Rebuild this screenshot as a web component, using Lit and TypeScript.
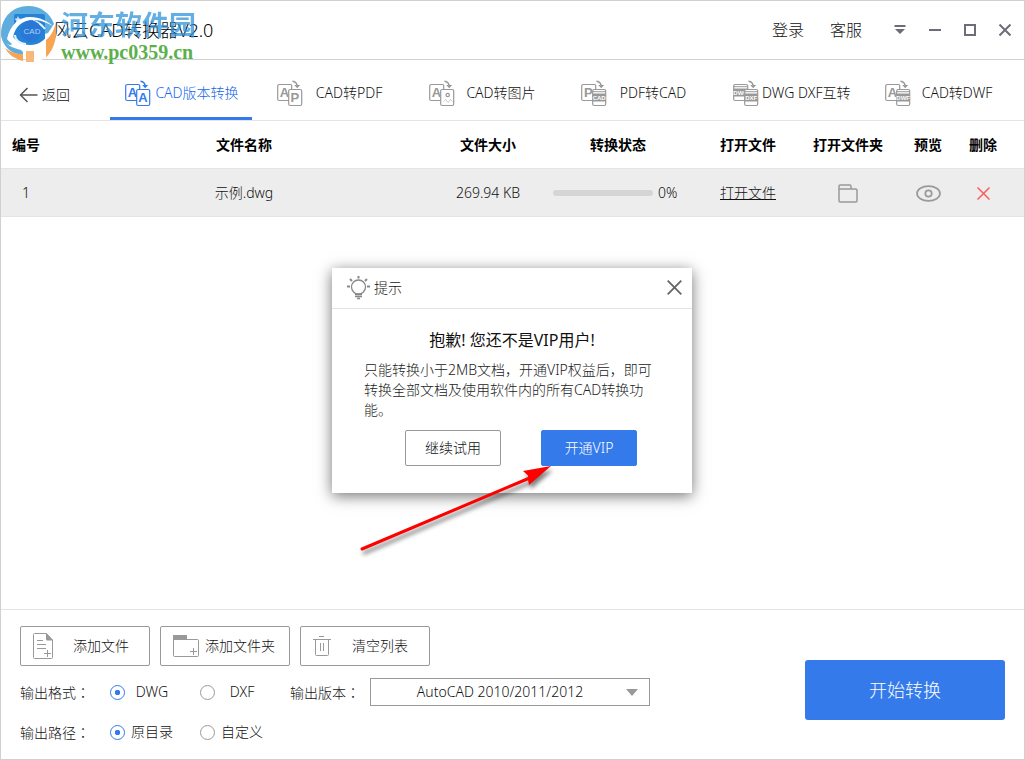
import { LitElement, html, svg, css } from "lit";
import { customElement, state } from "lit/decorators.js";
import { classMap } from "lit/directives/class-map.js";

type Face = { kind: "letter" | "band" | "picture"; text?: string };
interface Tab {
  label: string;
  from: Face;
  to: Face;
}

const TABS: Tab[] = [
  { label: "CAD版本转换", from: { kind: "letter", text: "A" }, to: { kind: "letter", text: "A" } },
  { label: "CAD转PDF", from: { kind: "letter", text: "A" }, to: { kind: "letter", text: "P" } },
  { label: "CAD转图片", from: { kind: "letter", text: "A" }, to: { kind: "picture" } },
  { label: "PDF转CAD", from: { kind: "letter", text: "P" }, to: { kind: "band", text: "CAD" } },
  { label: "DWG DXF互转", from: { kind: "band", text: "DWG" }, to: { kind: "band", text: "DXF" } },
  { label: "CAD转DWF", from: { kind: "letter", text: "A" }, to: { kind: "band", text: "DWF" } },
];

const FILES = [{ id: 1, name: "示例.dwg", size: "269.94 KB", progress: 0 }];

const VERSIONS = ["AutoCAD 2010/2011/2012", "AutoCAD 2007/2008/2009", "AutoCAD 2004/2005/2006"];

@customElement("convert-icon")
class ConvertIcon extends LitElement {
  static properties = { from: { attribute: false }, to: { attribute: false } };
  declare from: Face;
  declare to: Face;

  static styles = css`
    :host {
      display: block;
      flex: none;
      width: 26px;
      height: 27px;
    }
    svg {
      display: block;
    }
    text {
      font-family: "Liberation Sans", sans-serif;
      font-weight: 700;
      text-anchor: middle;
    }
    .glyph {
      font-size: 13px;
      fill: currentColor;
    }
    .code {
      font-size: 6px;
      fill: #fff;
    }
  `;

  private face(face: Face, x: number, y: number, w: number) {
    const box = svg`<rect x=${x} y=${y} width=${w} height="16" rx="1.5" fill="#fff" stroke="currentColor" stroke-width="1.2"/>`;
    if (face.kind === "letter") {
      return svg`${box}<text class="glyph" x=${x + w / 2 - 0.3} y=${y + 12}>${face.text}</text>`;
    }
    if (face.kind === "picture") {
      return svg`${box}<circle cx=${x + 7} cy=${y + 5.5} r="1.7" fill="none" stroke="currentColor" stroke-width="1.2"/>
        <path d="M${x + 3} ${y + 12}l2-2 2.500 3 2-3 2.500 2" fill="none" stroke="currentColor" stroke-width="1" opacity=".5"/>`;
    }
    return svg`${box}
      <path d="M${x} ${y + 2.2}h${w}" stroke="currentColor"/>
      <rect x=${x} y=${y + 4} width=${w} height="8" fill="currentColor"/>
      <text class="code" x=${x + w / 2} y=${y + 10.2}>${face.text}</text>`;
  }

  render() {
    return html`<svg width="26" height="27" viewBox="0 0 26 27" aria-hidden="true">
      ${this.face(this.from, 0.7, 4.5, 14)} ${this.face(this.to, 11.7, 9.5, 13)}
      <path d="M15.500 1.200c3 .3 4.500 2 4.700 5" fill="none" stroke="currentColor" stroke-width="1.500" />
      <path d="M17.200 5h6l-3 3.300z" fill="currentColor" />
    </svg>`;
  }
}

@customElement("app-root")
class AppRoot extends LitElement {
  @state() private active = 0;
  @state() private dialogOpen = true;
  @state() private format = "DWG";
  @state() private path = "原目录";

  static styles = css`
    :host {
      display: block;
      font: 300 14px/20px "Noto Sans", "Noto Sans CJK SC", sans-serif;
      color: #111;
    }
    * {
      box-sizing: border-box;
    }
    button,
    select,
    input {
      font: inherit;
      color: inherit;
      margin: 0;
    }
    button {
      padding: 0;
      border: 0;
      background: none;
      cursor: pointer;
      white-space: nowrap;
    }
    a {
      color: inherit;
      text-decoration: none;
    }
    svg {
      display: block;
      flex: none;
    }
    .window {
      position: relative;
      display: flex;
      flex-direction: column;
      min-height: 100vh;
      background: #fff;
      border: 1px solid #d0d0d0;
    }

    .titlebar {
      display: flex;
      align-items: center;
      height: 59px;
      border-bottom: 1px solid #d0d0d0;
      padding: 0 2px 0 12px;
    }
    .brand {
      display: flex;
      align-items: center;
      gap: 7px;
      margin: 0 auto 0 0;
      font-size: 18px;
      font-weight: 300;
      color: #000;
    }
    .account {
      display: flex;
      gap: 26px;
      margin-right: 20px;
      font-size: 16px;
    }
    .controls {
      display: flex;
      color: #6f6b7b;
    }
    .controls button {
      display: grid;
      place-items: center;
      width: 35px;
      height: 35px;
    }
    .watermark {
      position: absolute;
      left: 0;
      top: 2px;
      display: flex;
      align-items: flex-start;
      pointer-events: none;
    }
    .mark-text {
      margin: 3px 0 0 4px;
      white-space: nowrap;
    }
    .mark-name {
      display: block;
      font: 700 27px/36px "Noto Sans CJK SC", sans-serif;
      color: #2f93da;
      opacity: 0.75;
    }
    .mark-url {
      display: block;
      font: 700 20px/20px "Liberation Serif", serif;
      color: #5bb04c;
    }

    .tabs {
      display: grid;
      grid-template-columns: 99px repeat(6, minmax(0, 1fr));
      gap: 10px;
      height: 61px;
      padding-right: 12px;
      border-bottom: 1px solid #e4e4e4;
    }
    .back {
      display: flex;
      align-items: center;
      gap: 4px;
      padding: 9px 0 0 18px;
    }
    .tab {
      display: flex;
      align-items: center;
      gap: 3px;
      padding: 9px 12px 0 15px;
      border-bottom: 3px solid transparent;
    }
    .tab convert-icon {
      color: #999;
    }
    .tab span {
      flex: 1;
      text-align: center;
    }
    .tab.active,
    .tab.active convert-icon {
      color: #347aeb;
      border-color: #347aeb;
    }
    .tab.active {
      color: #1468e8;
    }

    .list {
      flex: 1;
    }
    table {
      width: 100%;
      table-layout: fixed;
      border-collapse: separate;
      border-spacing: 0;
      text-align: center;
    }
    th,
    td {
      height: 48px;
      padding: 0;
      border-bottom: 1px solid #e4e4e4;
      white-space: nowrap;
    }
    th {
      font-weight: 700;
      color: #000;
    }
    td {
      background: #ededed;
    }
    th:last-child,
    td:last-child {
      padding-right: 17px;
    }
    .c-no {
      width: 50px;
    }
    .c-mid {
      width: 102px;
    }
    .c-state {
      width: 158px;
    }
    .c-folder {
      width: 98px;
    }
    .c-view {
      width: 62px;
    }
    .c-del {
      width: 65px;
    }
    .state {
      display: flex;
      align-items: center;
      gap: 5px;
      padding-left: 14px;
    }
    progress {
      appearance: none;
      width: 100px;
      height: 6px;
      border: 0;
    }
    progress::-webkit-progress-bar {
      background: #d5d5d5;
      border-radius: 3px;
    }
    progress::-webkit-progress-value {
      background: #347aeb;
      border-radius: 3px;
    }
    .open {
      text-decoration: underline;
    }
    td button {
      display: inline-block;
      vertical-align: middle;
    }

    .footer {
      display: flex;
      justify-content: space-between;
      align-items: flex-end;
      border-top: 1px solid #e4e4e4;
      padding: 16px 19px 13px;
    }
    .settings {
      display: grid;
      gap: 12px;
    }
    .actions {
      display: flex;
      gap: 10px;
    }
    .action {
      display: flex;
      align-items: center;
      width: 130px;
      height: 40px;
      padding-left: 12px;
      border: 1px solid #999;
      border-radius: 2px;
    }
    .action span {
      flex: 1;
      text-align: center;
    }
    .action.wide span {
      margin-right: 8px;
    }
    .row {
      display: grid;
      grid-template-columns: 90px 90px 90px 80px 280px;
      align-items: center;
      height: 28px;
      margin: 0;
      padding: 0;
      border: 0;
    }
    .colon {
      font-family: "Noto Sans CJK TC", sans-serif;
    }
    .choice {
      display: flex;
      align-items: center;
      gap: 6px;
    }
    .choice span {
      width: 42px;
      text-align: center;
    }
    input[type="radio"] {
      appearance: none;
      width: 15px;
      height: 15px;
      border: 1px solid #999;
      border-radius: 50%;
      background: #fff;
    }
    input[type="radio"]:checked {
      border-color: #347aeb;
      background: radial-gradient(circle, #347aeb 2.5px, transparent 3px);
    }
    .pick {
      position: relative;
    }
    .pick svg {
      position: absolute;
      right: 12px;
      top: 11px;
      pointer-events: none;
    }
    select {
      display: block;
      appearance: none;
      width: 100%;
      height: 28px;
      padding: 0 20px 0 0;
      border: 1px solid #999;
      border-radius: 0;
      background: #fff;
      text-align: center;
      text-align-last: center;
    }
    .start {
      width: 200px;
      height: 60px;
      margin-bottom: 26px;
      border-radius: 3px;
      background: #347aeb;
      color: #fff;
      font-size: 18px;
    }

    .overlay {
      position: absolute;
      inset: 0;
      display: grid;
      place-items: center;
      padding-right: 1px;
      pointer-events: none;
    }
    .dialog {
      position: relative;
      width: 360px;
      background: #fff;
      box-shadow: 0 3px 14px rgba(0, 0, 0, 0.55);
      pointer-events: auto;
    }
    .dialog-head {
      display: flex;
      align-items: center;
      gap: 4px;
      height: 41px;
      padding: 0 10px 0 15px;
      border-bottom: 1px solid #e4e4e4;
    }
    .dialog-head h2 {
      margin: 0 auto 0 0;
      font-size: 14px;
      font-weight: 300;
    }
    .dialog-body {
      padding: 19px 32px 27px;
    }
    .dialog-body h3 {
      margin: 0 0 8px;
      font-size: 16px;
      line-height: 24px;
      font-weight: 400;
      text-align: center;
      color: #111;
    }
    .dialog-body p {
      margin: 0 0 10px;
      color: #222;
    }
    .buttons {
      display: flex;
      justify-content: center;
      gap: 40px;
      padding-left: 18px;
    }
    .buttons button {
      width: 96px;
      height: 36px;
      border: 1px solid #999;
      border-radius: 2px;
    }
    .buttons .primary {
      border-color: #347aeb;
      background: #347aeb;
      color: #fff;
    }
    .pointer {
      position: absolute;
      left: 20px;
      top: 190px;
      pointer-events: none;
      filter: drop-shadow(2px 4px 2px rgba(0, 0, 0, 0.5));
    }
  `;

  private renderTitle() {
    return html`<header class="titlebar">
      <h1 class="brand">
        <svg width="33" height="34" viewBox="0 0 33 34" aria-hidden="true">
          <rect x="1" y="1" width="31" height="32" rx="3" fill="#1677d2" />
        </svg>
        风云CAD转换器V2.0
      </h1>
      <nav class="account"><a href="#login">登录</a><a href="#service">客服</a></nav>
      <div class="controls">
        <button aria-label="菜单">
          <svg width="12" height="12" viewBox="0 0 12 12" fill="currentColor"><path d="M.5 1h11v2H.5zM1 5h10l-5 5z" /></svg>
        </button>
        <button aria-label="最小化">
          <svg width="12" height="12" viewBox="0 0 12 12" fill="currentColor"><path d="M0 5h12v2H0z" /></svg>
        </button>
        <button aria-label="最大化">
          <svg width="12" height="12" viewBox="0 0 12 12" fill="none" stroke="currentColor" stroke-width="2"><path d="M1 1h10v10H1z" /></svg>
        </button>
        <button aria-label="关闭">
          <svg width="12" height="12" viewBox="0 0 12 12" fill="none" stroke="currentColor" stroke-width="2"><path d="M.5.5l11 11M11.500.5l-11 11" /></svg>
        </button>
      </div>
    </header>`;
  }

  private renderWatermark() {
    return html`<div class="watermark">
      <svg width="56" height="60" viewBox="0 0 56 60" aria-hidden="true">
        <path d="M0 31C0 14 12 3 27 3c13 0 22 7 26 18l-6 9L9 42C3 41 0 37 0 31z" fill="#5dade0" />
        <rect x="13" y="11" width="31" height="31" rx="2" fill="#2583d8" />
        <path d="M17 13l1 2.500 2.500.3-2 1.600.6 2.600-2.100-1.400-2.200 1.400.6-2.600-2-1.600 2.600-.3z" fill="#d5ebfb" />
        <path d="M6 36C9 22 18 14 29 14c10 0 17 4 23 9-6-3-12-6-20-6-11 0-18 7-20 17 4 5 10 8 17 8 10 0 17-6 23-18 1 8-3 15-9 20-10 6-28 4-37-8z" fill="#fff" />
        <path d="M44 26c-3-4-7-7-12-8M14 32c0 5 5 9 11 9" fill="none" stroke="#e6f3fc" stroke-width="2" />
        <circle cx="30" cy="28" r="10.500" fill="#2a78d6" />
        <text x="31" y="31" text-anchor="middle" font-family="Liberation Sans" font-size="8" fill="#a9d2f6">CAD</text>
        <path d="M1 36c4 6 11 9 19 11l2 2v3C12 51 4 46 1 36z" fill="#5dade0" />
        <path d="M4 45c5 4 11 6 18 6v7C14 56 8 52 4 45z" fill="#f7a453" />
        <path d="M25 48h8v11h-8z" fill="#f9b878" />
        <path d="M45 37c5-4 8-10 10-17 2 17-4 29-10 34z" fill="#f7a453" />
        <path d="M33 48c5-1 9-4 12-8v14c-4 3-8 4-12 5z" fill="#fff" />
        <path d="M45 38v16l3-3V35z" fill="#f7a453" />
      </svg>
      <div class="mark-text">
        <span class="mark-name">河东软件园</span>
        <span class="mark-url">www.pc0359.cn</span>
      </div>
    </div>`;
  }

  private renderTabs() {
    return html`<nav class="tabs">
      <button class="back">
        <svg width="19" height="16" viewBox="0 0 19 16" fill="none" stroke="#555" stroke-width="1.500"><path d="M18.500 8H1.500M8.500 1l-7 7 7 7" /></svg>
        返回
      </button>
      ${TABS.map(
        (tab, i) => html`<button class=${classMap({ tab: true, active: i === this.active })} @click=${() => (this.active = i)}>
          <convert-icon .from=${tab.from} .to=${tab.to}></convert-icon><span>${tab.label}</span>
        </button>`,
      )}
    </nav>`;
  }

  private renderList() {
    return html`<main class="list">
      <table>
        <colgroup>
          <col class="c-no" /><col /><col class="c-mid" /><col class="c-state" /><col class="c-mid" />
          <col class="c-folder" /><col class="c-view" /><col class="c-del" />
        </colgroup>
        <thead>
          <tr>
            ${["编号", "文件名称", "文件大小", "转换状态", "打开文件", "打开文件夹", "预览", "删除"].map((h) => html`<th scope="col">${h}</th>`)}
          </tr>
        </thead>
        <tbody>
          ${FILES.map(
            (f) => html`<tr>
              <td>${f.id}</td>
              <td>${f.name}</td>
              <td>${f.size}</td>
              <td>
                <div class="state"><progress max="100" value=${f.progress} aria-label="转换状态"></progress><span>${f.progress}%</span></div>
              </td>
              <td><a class="open" href="#open">打开文件</a></td>
              <td>
                <button aria-label="打开文件夹">
                  <svg width="20" height="19" viewBox="0 0 20 19" fill="none" stroke="#999" stroke-width="1.500">
                    <path d="M1 5V2.200Q1 1 2.200 1h9.600Q13 1 13 2.200V5M2.200 5h15.600Q19 5 19 6.200v10.600q0 1.200-1.200 1.200H2.200Q1 18 1 16.800V5z" />
                  </svg>
                </button>
              </td>
              <td>
                <button aria-label="预览">
                  <svg width="25" height="17" viewBox="0 0 25 17" fill="none" stroke="#999" stroke-width="1.700">
                    <ellipse cx="12.5" cy="8.500" rx="11.500" ry="7.300" />
                    <circle cx="12.5" cy="8.500" r="3.200" />
                  </svg>
                </button>
              </td>
              <td>
                <button aria-label="删除">
                  <svg width="13" height="13" viewBox="0 0 13 13" fill="none" stroke="#fb5c5c" stroke-width="1.500"><path d="M.5.5l12 12M12.500.5l-12 12" /></svg>
                </button>
              </td>
            </tr>`,
          )}
        </tbody>
      </table>
    </main>`;
  }

  private radio(group: "format" | "path", value: string) {
    return html`<label class="choice">
      <input type="radio" name=${group} .checked=${this[group] === value} @change=${() => (this[group] = value)} /><span>${value}</span>
    </label>`;
  }

  private renderFooter() {
    return html`<footer class="footer">
      <div class="settings">
        <div class="actions">
          <button class="action">
            <svg width="20" height="26" viewBox="0 0 20 26" fill="none" stroke="#999">
              <path d="M13.500.5h-12q-1 0-1 1v23q0 1 1 1h17q1 0 1-1V7M4 7.500h6M4 11.500h9M4 15.500h9M11 20.500h7M14.500 17v7" />
              <path d="M13.500.5l6 6.500h-6z" fill="#999" />
            </svg>
            <span>添加文件</span>
          </button>
          <button class="action wide">
            <svg width="26" height="22" viewBox="0 0 26 22" fill="none" stroke="#999">
              <path d="M.5 4v16.500q0 1 1 1h23q1 0 1-1v-15q0-1-1-1H.5M17 16.500h7M20.500 13v7" />
              <path d="M0 0h14v4.500H0z" fill="#999" stroke="none" />
            </svg>
            <span>添加文件夹</span>
          </button>
          <button class="action">
            <svg width="18" height="20" viewBox="0 0 18 20" fill="none" stroke="#999">
              <path d="M6 .5h5M0 3.500h18M2.500 3.500v15q0 1 1 1h11q1 0 1-1v-15M7.500 7v8M10.500 7v8" />
            </svg>
            <span>清空列表</span>
          </button>
        </div>
        <div class="row" role="radiogroup" aria-label="输出格式">
          <span>输出格式<span class="colon">：</span></span>
          ${this.radio("format", "DWG")} ${this.radio("format", "DXF")}
          <label for="version">输出版本<span class="colon">：</span></label>
          <div class="pick">
            <select id="version">
              ${VERSIONS.map((v) => html`<option>${v}</option>`)}
            </select>
            <svg width="12" height="7" viewBox="0 0 12 7"><path d="M0 0h12L6 7z" fill="#999" /></svg>
          </div>
        </div>
        <div class="row" role="radiogroup" aria-label="输出路径">
          <span>输出路径<span class="colon">：</span></span>
          ${this.radio("path", "原目录")} ${this.radio("path", "自定义")}
        </div>
      </div>
      <button class="start">开始转换</button>
    </footer>`;
  }

  private renderDialog() {
    if (!this.dialogOpen) return null;
    const close = () => (this.dialogOpen = false);
    return html`<div class="overlay">
      <section class="dialog" role="dialog" aria-labelledby="dialog-title">
        <header class="dialog-head">
          <svg width="23" height="24" viewBox="0 0 23 24" fill="none" stroke="#888" stroke-width="1.300">
            <circle cx="11.500" cy="11" r="7" />
            <path d="M11.500 0v2.500M0 10.500h3M20 10.500h3M3 3l2 2M20 3l-2 2" stroke-width="2" />
            <path d="M8 18.500h7M8 20.500h7M10 22.500h3" />
          </svg>
          <h2 id="dialog-title">提示</h2>
          <button aria-label="关闭" @click=${close}>
            <svg width="15" height="15" viewBox="0 0 15 15" fill="none" stroke="#666" stroke-width="1.800"><path d="M.7.7l13.600 13.600M14.300.7L.7 14.300" /></svg>
          </button>
        </header>
        <div class="dialog-body">
          <h3>抱歉! 您还不是VIP用户!</h3>
          <p>只能转换小于2MB文档，开通VIP权益后，即可转换全部文档及使用软件内的所有CAD转换功能。</p>
          <div class="buttons">
            <button @click=${close}>继续试用</button>
            <button class="primary">开通VIP</button>
          </div>
        </div>
        <svg class="pointer" width="210" height="100" viewBox="0 0 210 100" aria-hidden="true">
          <path d="M10 91L180 19" stroke="#f00" stroke-width="3" stroke-linecap="round" />
          <path d="M199 8L171 13l5 4.500 0 4 1 5.500z" fill="#f00" />
        </svg>
      </section>
    </div>`;
  }

  render() {
    return html`<div class="window">
      ${this.renderTitle()} ${this.renderTabs()} ${this.renderList()} ${this.renderFooter()} ${this.renderDialog()} ${this.renderWatermark()}
    </div>`;
  }
}
